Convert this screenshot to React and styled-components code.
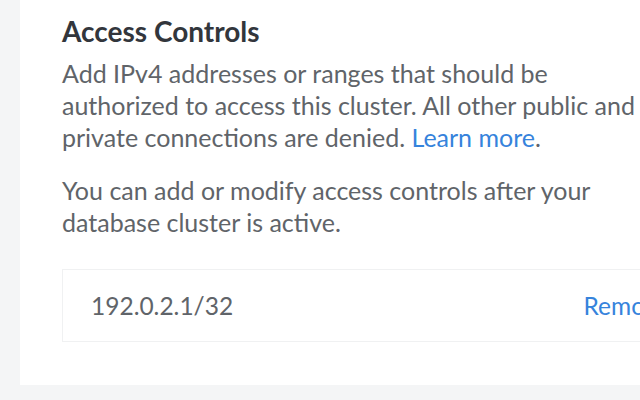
import styled, { createGlobalStyle } from "styled-components";

const GlobalStyle = createGlobalStyle`
  html, body {
    margin: 0;
    padding: 0;
    background: #f4f5f6;
    overflow: hidden;
  }
  body {
    font-family: Lato, "Liberation Sans", sans-serif;
  }
`

// white panel, runs off the right edge of the window
const Panel = styled.section`
  width: 721px;
  margin: 0 0 15px 20px;
  padding: 13px 42px 43px 42px;
  box-sizing: border-box;
  background: #fff;
`
const Title = styled.h2`
  margin: 0 0 8px;
  font-size: 28px;
  font-weight: 700;
  line-height: 36px;
  color: #32363c;
`
const Text = styled.p`
  max-width: 580px;
  margin: 0 0 21px;
  font-size: 25px;
  line-height: 32px;
  color: #606469;
`
const Link = styled.a`
  color: #3683dc;
  text-decoration: none;
  cursor: pointer;
`
const Table = styled.div`
  margin-top: 31px;
  border: 1px solid #f0f1f2;
`
const Row = styled.div`
  display: flex;
  align-items: center;
  justify-content: space-between;
  height: 71px;
  padding: 0 28px;
  font-size: 24.5px;
  color: #606469;
`
const Action = styled.button`
  border: none;
  background: none;
  padding: 0;
  font: inherit;
  color: #3683dc;
  cursor: pointer;
`

function App() {
  return (
    <>
      <GlobalStyle />
      <Panel>
        <Title>Access Controls</Title>
        <Text>
          Add IPv4 addresses or ranges that should be authorized to access this
          cluster. All other public and private connections are denied.{" "}
          <Link>Learn more</Link>.
        </Text>
        <Text>
          You can add or modify access controls after your database cluster is
          active.
        </Text>
        <Table>
          <Row>
            <span>192.0.2.1/32</span>
            <Action>Remove</Action>
          </Row>
        </Table>
      </Panel>
    </>
  )
}

export default App
